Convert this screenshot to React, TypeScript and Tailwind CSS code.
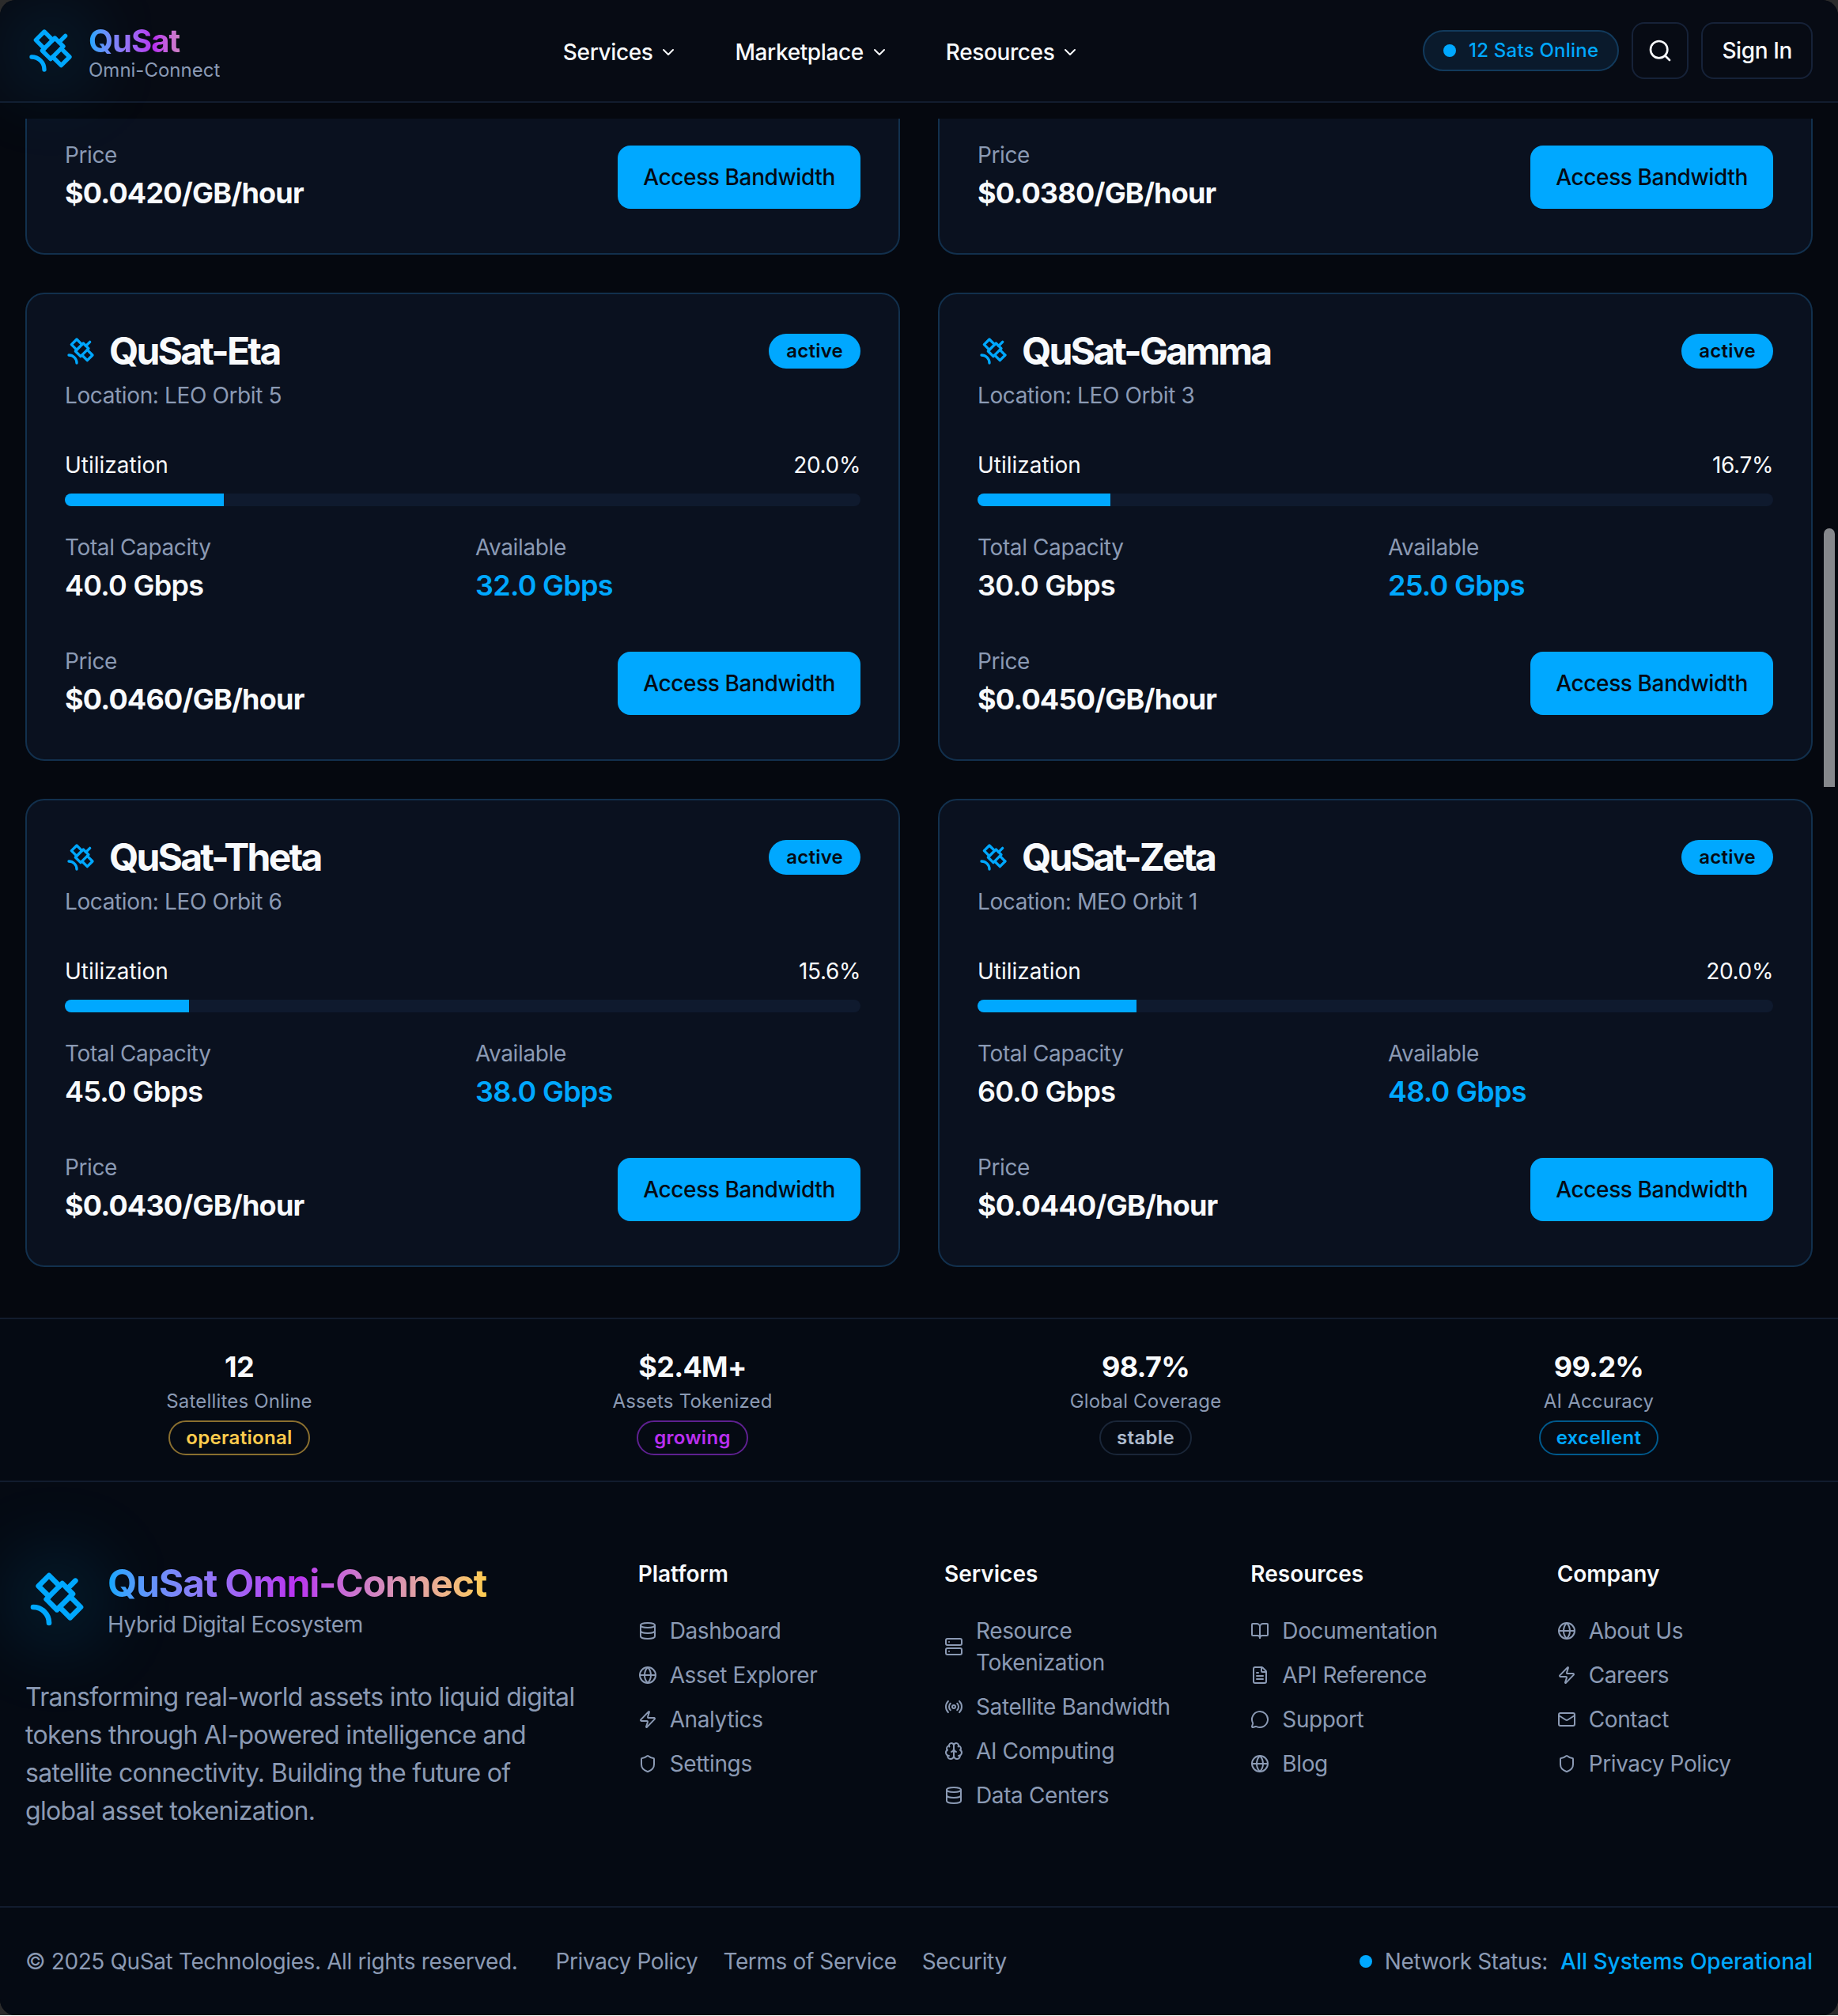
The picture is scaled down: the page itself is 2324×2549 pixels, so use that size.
import {
  BookOpen,
  Brain,
  ChevronDown,
  Database,
  FileText,
  Globe,
  Mail,
  MessageCircle,
  Radio,
  Search,
  Server,
  Shield,
  Zap,
} from 'lucide-react';

const satellites = [
  { name: 'QuSat-Eta', location: 'LEO Orbit 5', utilization: 20.0, capacity: '40.0', available: '32.0', price: '0.0460' },
  { name: 'QuSat-Gamma', location: 'LEO Orbit 3', utilization: 16.7, capacity: '30.0', available: '25.0', price: '0.0450' },
  { name: 'QuSat-Theta', location: 'LEO Orbit 6', utilization: 15.6, capacity: '45.0', available: '38.0', price: '0.0430' },
  { name: 'QuSat-Zeta', location: 'MEO Orbit 1', utilization: 20.0, capacity: '60.0', available: '48.0', price: '0.0440' },
];

const stats = [
  { value: '12', label: 'Satellites Online', status: 'operational', badge: 'border-[#8a6f2f] text-[#ffcc4d]' },
  { value: '$2.4M+', label: 'Assets Tokenized', status: 'growing', badge: 'border-[#5e2090] text-[#b92ff0]' },
  { value: '98.7%', label: 'Global Coverage', status: 'stable', badge: 'border-[#1a2638] text-[#aebbcd]' },
  { value: '99.2%', label: 'AI Accuracy', status: 'excellent', badge: 'border-[#00598c] text-[#00a8ff]' },
];

const footerColumns = [
  {
    title: 'Platform',
    links: [
      { label: 'Dashboard', icon: Database },
      { label: 'Asset Explorer', icon: Globe },
      { label: 'Analytics', icon: Zap },
      { label: 'Settings', icon: Shield },
    ],
  },
  {
    title: 'Services',
    links: [
      { label: 'Resource Tokenization', icon: Server },
      { label: 'Satellite Bandwidth', icon: Radio },
      { label: 'AI Computing', icon: Brain },
      { label: 'Data Centers', icon: Database },
    ],
  },
  {
    title: 'Resources',
    links: [
      { label: 'Documentation', icon: BookOpen },
      { label: 'API Reference', icon: FileText },
      { label: 'Support', icon: MessageCircle },
      { label: 'Blog', icon: Globe },
    ],
  },
  {
    title: 'Company',
    links: [
      { label: 'About Us', icon: Globe },
      { label: 'Careers', icon: Zap },
      { label: 'Contact', icon: Mail },
      { label: 'Privacy Policy', icon: Shield },
    ],
  },
];

// the older lucide satellite, the one in the package has a different shape now
function SatelliteIcon({ className }: { className: string }) {
  return (
    <svg
      viewBox="0 0 24 24"
      fill="none"
      stroke="currentColor"
      strokeWidth="2"
      strokeLinecap="round"
      strokeLinejoin="round"
      className={className}
    >
      <path d="M13 7 9 3 5 7l4 4" />
      <path d="m17 11 4 4-4 4-4-4" />
      <path d="m8 12 4 4 6-6-4-4Z" />
      <path d="m16 8 3-3" />
      <path d="M9 21a6 6 0 0 0-6-6" />
    </svg>
  );
}

function PriceRow({ price }: { price: string }) {
  return (
    <div className="flex items-center justify-between">
      <div>
        <p className="text-sm text-[#8b9ab4]">Price</p>
        <p className="text-lg font-bold tracking-[-0.022em] text-[#f8fafc]">${price}/GB/hour</p>
      </div>
      <button className="h-10 rounded-lg bg-[#00a8ff] px-4 text-sm font-medium text-[#050a14]">
        Access Bandwidth
      </button>
    </div>
  );
}

function SatelliteCard({ sat }: { sat: (typeof satellites)[number] }) {
  return (
    <div className="rounded-xl border border-[#12304d] bg-[#0a111f]">
      <div className="flex flex-col gap-1.5 p-6">
        <div className="flex items-center justify-between">
          <h3 className="flex items-center gap-2 text-2xl leading-none font-bold tracking-[-0.058em] text-[#f8fafc]">
            <SatelliteIcon className="h-5 w-5 text-[#00a8ff]" />
            {sat.name}
          </h3>
          <span className="rounded-full border border-transparent bg-[#00a8ff] px-2.5 py-0.5 text-xs font-semibold tracking-[0.01em] text-[#050a14]">
            active
          </span>
        </div>
        <p className="text-sm text-[#8b9ab4]">Location: {sat.location}</p>
      </div>
      <div className="px-6 pb-6">
        <div className="mb-2 flex justify-between text-sm text-[#f8fafc]">
          <span className="tracking-normal">Utilization</span>
          <span>{sat.utilization.toFixed(1)}%</span>
        </div>
        <div className="h-2 overflow-hidden rounded-full bg-[#0f1a2e]">
          <div className="h-full bg-[#00a8ff]" style={{ width: `${sat.utilization}%` }} />
        </div>
        <div className="mt-4 mb-6 grid grid-cols-2 gap-4">
          <div>
            <p className="text-sm text-[#8b9ab4]">Total Capacity</p>
            <p className="text-lg font-semibold tracking-[-0.02em] text-[#f8fafc]">{sat.capacity} Gbps</p>
          </div>
          <div>
            <p className="text-sm text-[#8b9ab4]">Available</p>
            <p className="text-lg font-semibold tracking-[-0.02em] text-[#00a8ff]">{sat.available} Gbps</p>
          </div>
        </div>
        <PriceRow price={sat.price} />
      </div>
    </div>
  );
}

// first row is scrolled under the header, only the bottom of the card shows
function ClippedCard({ price }: { price: string }) {
  return (
    <div className="rounded-b-xl border-x border-b border-[#12304d] bg-[#0a111f] px-6 pt-[12.75px] pb-6">
      <PriceRow price={price} />
    </div>
  );
}

function LogoIcon({ size }: { size: string }) {
  return (
    <div className="relative">
      <div className="absolute -inset-2 rounded-full bg-[#00a8ff]/15 blur-xl" />
      <SatelliteIcon className={`relative text-[#00a8ff] ${size}`} />
    </div>
  );
}

export default function App() {
  return (
    // the reference is a 2x capture of a 1162px wide page
    <div className="relative bg-[#2b2b2b] font-[Inter,sans-serif] tracking-[-0.012em] antialiased [zoom:2]">
      <div className="overflow-hidden rounded-[10px] bg-[#05080f]">
        <header className="flex h-[65px] items-center justify-between border-b border-[#121c2e] bg-[#070b14] px-4">
          <div className="flex items-center gap-2">
            <LogoIcon size="h-8 w-8" />
            <div>
              <div className="bg-gradient-to-r from-[#00a8ff] via-[#b92ff0] to-[#ffcc4d] bg-clip-text text-xl leading-tight font-bold tracking-tight text-transparent">
                QuSat
              </div>
              <div className="text-xs leading-none tracking-normal text-[#8b9ab4]">Omni-Connect</div>
            </div>
          </div>

          <nav className="flex items-center gap-3 pt-0.5">
            {['Services', 'Marketplace', 'Resources'].map((item) => (
              <button key={item} className="flex items-center gap-1 px-3 text-sm font-medium text-[#f8fafc]">
                {item}
                <ChevronDown className="h-3 w-3" />
              </button>
            ))}
          </nav>

          <div className="flex items-center gap-2">
            <div className="flex items-center gap-2 rounded-full border border-[#123a5c] bg-[#0a1a2c] px-3 py-1 text-xs font-medium tracking-[0.01em] text-[#00a8ff]">
              <span className="h-2 w-2 rounded-full bg-[#00a8ff]" />
              12 Sats Online
            </div>
            <button className="flex h-9 w-9 items-center justify-center rounded-lg border border-[#162238] text-[#f8fafc]">
              <Search className="h-4 w-4" />
            </button>
            <button className="h-9 rounded-lg border border-[#162238] px-3 text-sm font-medium text-[#f8fafc]">
              Sign In
            </button>
          </div>
        </header>

        <main className="grid grid-cols-2 gap-6 px-4 pt-2.5 pb-8">
          <ClippedCard price="0.0420" />
          <ClippedCard price="0.0380" />
          {satellites.map((sat) => (
            <SatelliteCard key={sat.name} sat={sat} />
          ))}
        </main>

        <section className="grid grid-cols-4 gap-4 border-y border-[#121c2e] bg-[#050a13] px-4 py-4 text-center">
          {stats.map((stat) => (
            <div key={stat.label}>
              <div className="text-lg leading-7 font-bold tracking-[-0.02em] text-[#f8fafc]">{stat.value}</div>
              <div className="text-xs tracking-[0.008em] text-[#8b9ab4]">{stat.label}</div>
              <span className={`mt-1 inline-block rounded-full border px-2.5 py-0.5 align-top text-xs font-semibold tracking-[0.013em] ${stat.badge}`}>
                {stat.status}
              </span>
            </div>
          ))}
        </section>

        <footer className="bg-[#050a13]">
          <div className="grid grid-cols-6 gap-8 px-4 py-12">
            <div className="col-span-2">
              <div className="mb-6 flex items-center gap-3">
                <LogoIcon size="h-10 w-10" />
                <div>
                  <div className="bg-gradient-to-r from-[#00a8ff] via-[#b92ff0] to-[#ffcc4d] bg-clip-text text-2xl font-bold tracking-tight text-transparent">
                    QuSat Omni-Connect
                  </div>
                  <div className="text-sm text-[#8b9ab4]">Hybrid Digital Ecosystem</div>
                </div>
              </div>
              <p className="pr-2 text-base tracking-[-0.021em] text-[#8b9ab4]">
                Transforming real-world assets into liquid digital tokens through AI-powered intelligence and
                satellite connectivity. Building the future of global asset tokenization.
              </p>
            </div>

            {footerColumns.map((column) => (
              <div key={column.title}>
                <h4 className="mb-4 text-sm font-semibold tracking-normal text-[#f8fafc]">{column.title}</h4>
                <ul className="flex flex-col gap-2">
                  {column.links.map((link) => (
                    <li key={link.label} className="flex items-center gap-2 text-sm text-[#8b9ab4]">
                      <link.icon className="h-3 w-3 shrink-0" />
                      <span>{link.label}</span>
                    </li>
                  ))}
                </ul>
              </div>
            ))}
          </div>

          <div className="flex items-center justify-between border-t border-[#121c2e] px-4 py-6 text-sm text-[#8b9ab4]">
            <div className="flex items-center gap-6">
              <span>© 2025 QuSat Technologies. All rights reserved.</span>
              <div className="flex gap-4">
                <span>Privacy Policy</span>
                <span>Terms of Service</span>
                <span>Security</span>
              </div>
            </div>
            <div className="flex items-center gap-2">
              <span className="h-2 w-2 rounded-full bg-[#00a8ff]" />
              <span>Network Status:</span>
              <span className="font-medium tracking-normal text-[#00a8ff]">All Systems Operational</span>
            </div>
          </div>
        </footer>
      </div>

      {/* overlay scrollbar */}
      <div className="absolute top-[334px] right-[2px] h-[163.5px] w-[7px] rounded-t-full bg-[#86888c]" />
    </div>
  );
}
